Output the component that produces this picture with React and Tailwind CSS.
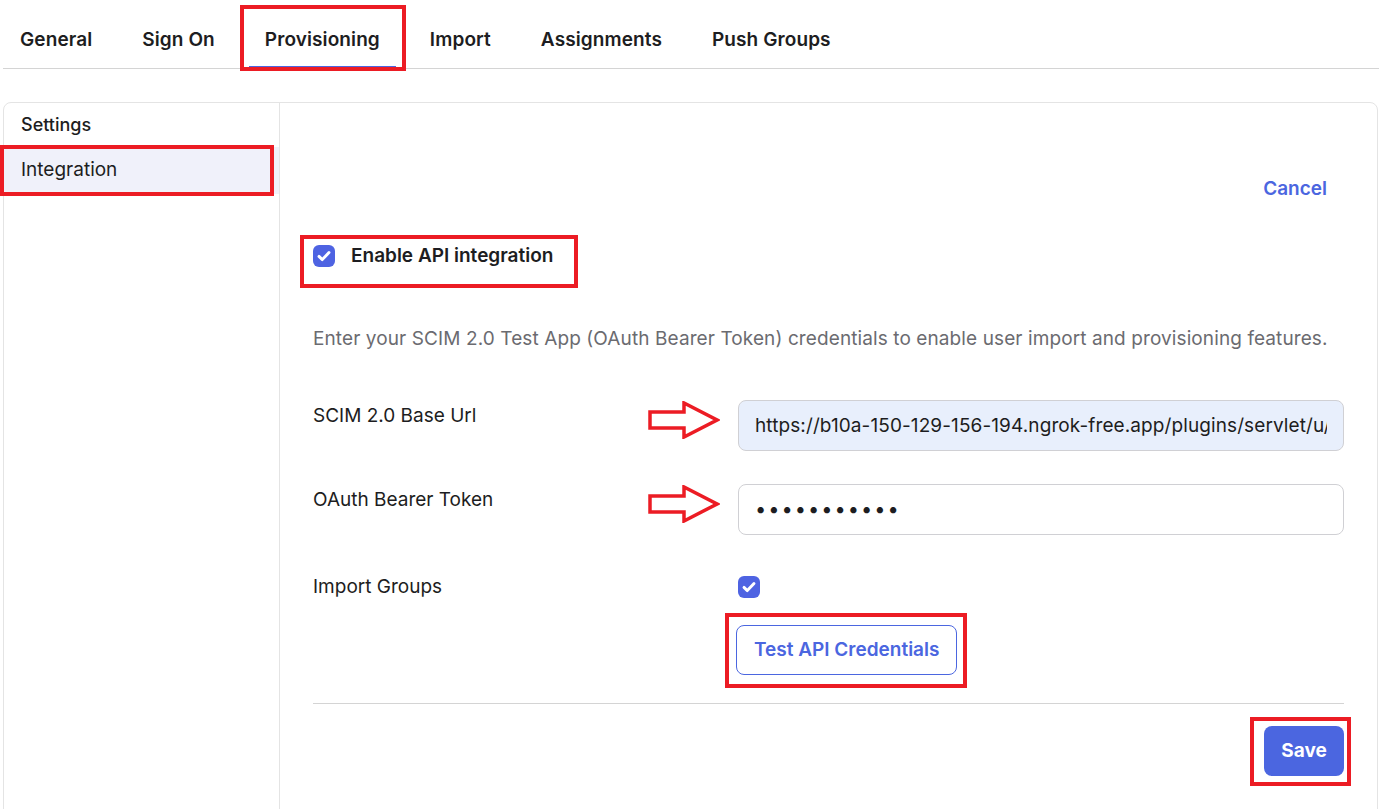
import React from 'react';

const tabs = ['General', 'Sign On', 'Provisioning', 'Import', 'Assignments', 'Push Groups'];

const CheckBox = () => (
  <span className="flex h-[22px] w-[22px] shrink-0 items-center justify-center rounded-[6px] bg-[#4e63e2]">
    <svg width="16" height="16" viewBox="0 0 16 16" fill="none">
      <path d="M3 8.4l3.3 3.2L13 4.6" stroke="white" strokeWidth="2.9" strokeLinecap="round" strokeLinejoin="round" />
    </svg>
  </span>
);

// red hollow arrow used as screenshot annotation
const RedArrow = () => (
  <svg width="72" height="38" viewBox="0 0 72 38" fill="none">
    <polygon points="2,11 36,11 36,2 69,19 36,36 36,27 2,27" fill="white" stroke="#ec1c24" strokeWidth="3.5" strokeLinejoin="miter" />
  </svg>
);

const Box = ({ className }) => (
  <div className={`pointer-events-none absolute border-4 border-[#ec1c24] ${className}`} />
);

const App = () => {
  return (
    <div className="relative h-[809px] w-[1379px] overflow-hidden bg-white text-[#1d1d21]" style={{ fontFamily: 'Inter, "Noto Sans", sans-serif' }}>
      {/* Tabs */}
      <div className="ml-[3px] flex h-[69px] items-stretch gap-[18px] border-b border-[#d4d4d4] pl-[1px]">
        {tabs.map((t) => (
          <div
            key={t}
            className={`flex items-center px-4 pt-[14px] text-[19px] font-semibold tracking-[0.1px] ${t === 'Provisioning' ? 'border-b-2 border-[#4b66e0]' : 'border-b-2 border-transparent'}`}
          >
            {t}
          </div>
        ))}
      </div>

      {/* Panel */}
      <div className="ml-[3px] mt-[33px] flex h-[760px] w-[1375px] rounded-lg border border-[#e4e4e4]">
        <div className="w-[276px] shrink-0 border-r border-[#e4e4e4]">
          <div className="px-[17px] pt-[8px] pb-[9px] text-[18px] font-medium">Settings</div>
          <div className="flex h-[47px] items-center bg-[#f0f1fa] px-[17px] text-[19px]">Integration</div>
        </div>

        <div className="flex-1 px-[33px]">
          <div className="mt-[72px] flex justify-end pr-[17px]">
            <span className="text-[19px] font-semibold text-[#4b66e0]">Cancel</span>
          </div>

          <div className="mt-[38px] flex items-center gap-4">
            <CheckBox />
            <span className="text-[19px] font-semibold">Enable API integration</span>
          </div>

          <p className="mt-[55px] text-[19px] tracking-[0.1px] text-[#6b6b70]">
            Enter your SCIM 2.0 Test App (OAuth Bearer Token) credentials to enable user import and provisioning features.
          </p>

          <div className="mt-[46px] flex">
            <div className="flex w-[425px] shrink-0 items-start justify-between pt-[2px] text-[19px]">
              <span>SCIM 2.0 Base Url</span>
              <span className="mr-[18px] mt-[-1px]"><RedArrow /></span>
            </div>
            <input
              readOnly
              value="https://b10a-150-129-156-194.ngrok-free.app/plugins/servlet/u/scim"
              className="h-[51px] flex-1 rounded-lg border border-[#d0d0d4] bg-[#e8effc] px-4 text-[19px] tracking-[0.1px] text-[#1d1d21] outline-none"
              style={{ fontFamily: 'Inter, sans-serif' }}
            />
          </div>

          <div className="mt-[33px] flex">
            <div className="flex w-[425px] shrink-0 items-start justify-between pt-[2px] text-[19px]">
              <span>OAuth Bearer Token</span>
              <span className="mr-[18px] mt-[-1px]"><RedArrow /></span>
            </div>
            <div className="flex h-[51px] flex-1 items-center rounded-lg border border-[#d0d0d4] bg-white px-4 text-[20px] tracking-[2px] text-[#1d1d21]">
              •••••••••••
            </div>
          </div>

          <div className="mt-[38px] flex items-center">
            <div className="w-[425px] shrink-0 text-[19px]">Import Groups</div>
            <CheckBox />
          </div>

          <div className="mt-[24px] flex pl-[423px]">
            <button className="h-[50px] rounded-lg border border-[#4b66e0] px-[17px] text-[19px] font-semibold text-[#4b66e0]">
              Test API Credentials
            </button>
          </div>

          <div className="mt-[28px] border-t border-[#d4d4d4]" />

          <div className="mt-[22px] flex justify-end">
            <button className="h-[50px] w-[80px] rounded-lg bg-[#4b66e0] text-[19px] font-bold text-white">Save</button>
          </div>
        </div>
      </div>

      {/* annotation boxes */}
      <Box className="left-[240px] top-[5px] h-[66px] w-[166px]" />
      <Box className="left-0 top-[145px] h-[51px] w-[274px]" />
      <Box className="left-[300px] top-[235px] h-[53px] w-[278px]" />
      <Box className="left-[725px] top-[613px] h-[75px] w-[242px]" />
      <Box className="left-[1250px] top-[717px] h-[69px] w-[101px]" />
    </div>
  );
};

export default App;
